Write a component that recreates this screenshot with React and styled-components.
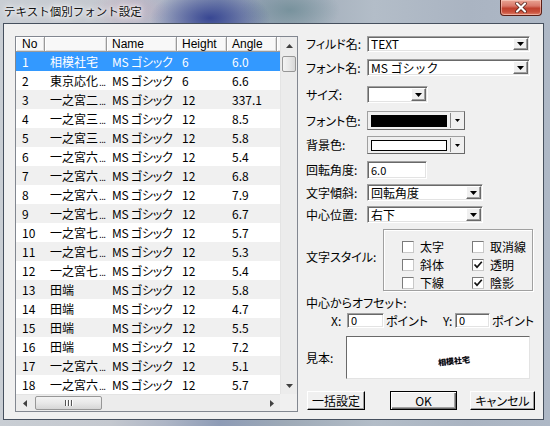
import React from 'react';
import styled, { createGlobalStyle } from 'styled-components';

const Global = createGlobalStyle`
  html, body { margin: 0; padding: 0; }
  body {
    width: 550px; height: 426px; overflow: hidden;
    font-family: "Noto Sans CJK JP", "Noto Sans", sans-serif;
    font-size: 12px; color: #000;
  }
  * { box-sizing: border-box; }
`;

const Win = styled.div`
  width: 550px;
  height: 426px;
  display: flex;
  flex-direction: column;
  padding: 0 6px 6px 3px;
  background:
    radial-gradient(ellipse 60px 30px at 210px 18px, rgba(40,55,140,0.85), rgba(40,55,140,0) 100%),
    radial-gradient(ellipse 50px 25px at 290px 10px, rgba(110,140,150,0.8), rgba(110,140,150,0) 100%),
    radial-gradient(ellipse 40px 20px at 130px 10px, rgba(200,170,190,0.6), rgba(200,170,190,0) 100%),
    linear-gradient(90deg, #c9ced4 0%, #c4c8cf 20%, #aeb6c6 30%, #8e9cb6 40%, #9eaab7 52%, #b3bdc8 68%, #aab4c2 85%, #aeb8c6 100%);
`;

const TitleBar = styled.div`
  height: 23px;
  display: flex;
  align-items: flex-start;
  justify-content: space-between;
  flex: none;
`;

const Title = styled.div`
  padding: 3px 0 0 1px;
  font-size: 11.5px;
  line-height: 16px;
  color: #111;
  text-shadow: 0 0 6px #fff, 0 0 10px #fff, 0 0 3px rgba(255,255,255,0.9);
`;

const CloseBtn = styled.div`
  width: 42px;
  height: 16px;
  margin-right: 2px;
  border: 1px solid #5b1f16;
  border-top: none;
  border-radius: 0 0 4px 4px;
  background: linear-gradient(#e9a493 0%, #d9786a 40%, #c0412e 55%, #c9503c 80%, #e0826c 100%);
  box-shadow: inset 0 0 0 1px rgba(255,220,210,0.5);
  display: flex;
  align-items: center;
  justify-content: center;
`;

const Client = styled.div`
  flex: 1;
  background: #f0f0f0;
  border: 1px solid #46505e;
  display: flex;
  gap: 8px;
  padding: 12px 0 0 11px;
`;

/* ---------- List ---------- */

const ListBox = styled.div`
  width: 283px;
  height: 376px;
  border: 1px solid #828790;
  background: #fff;
  display: grid;
  grid-template-columns: 264px 17px;
  grid-template-rows: 357px 17px;
  flex: none;
`;

const Content = styled.div`
  display: flex;
  flex-direction: column;
  overflow: hidden;
`;

const COLS = '29px 62px 70px 50px 50px 1fr';

const Header = styled.div`
  display: grid;
  grid-template-columns: ${COLS};
  height: 15px;
  flex: none;
`;

const HeadCell = styled.div`
  background: #f8f8f8;
  border-right: 1px solid #9a9a9a;
  border-bottom: 1px solid #9a9a9a;
  box-shadow: inset 1px 1px #fff, inset -1px -1px #dcdcdc;
  padding-left: ${p => p.$pl ?? 5}px;
  font-family: "Liberation Sans", "Noto Sans CJK JP", sans-serif;
  font-size: 12px;
  line-height: 14px;
  white-space: nowrap;
  overflow: hidden;
`;

const Row = styled.div`
  display: grid;
  grid-template-columns: ${COLS};
  height: 19px;
  flex: none;
  background: ${p => (p.$sel ? '#3399ff' : p.$alt ? '#f0f0f0' : '#fff')};
  color: ${p => (p.$sel ? '#fff' : '#000')};
`;

const Cell = styled.div`
  padding-left: ${p => p.$pl ?? 5}px;
  line-height: 19px;
  white-space: nowrap;
  overflow: hidden;
  font-size: 12px;
  font-feature-settings: ${p => (p.$fit ? '"palt"' : 'normal')};
  letter-spacing: ${p => (p.$fit ? '-0.2px' : '0')};
`;

const Dots = styled.span`
  font-family: "Liberation Sans", sans-serif;
  font-size: 10px;
  letter-spacing: -0.6px;
  margin-left: 1px;
`;

const VScroll = styled.div`
  background: #ececec;
  border-left: 1px solid #e4e4e4;
  display: flex;
  flex-direction: column;
`;

const ArrowBox = styled.div`
  width: ${p => p.$w ?? 17}px;
  height: ${p => p.$h ?? 17}px;
  flex: none;
  display: flex;
  align-items: center;
  justify-content: center;
`;

const VTrack = styled.div`
  flex: 1;
  padding: 2px 1px 0 1px;
`;

const VThumb = styled.div`
  height: 16px;
  border: 1px solid #979797;
  border-radius: 2px;
  background: linear-gradient(90deg, #f3f3f3, #e8e8e8 50%, #d8d8d8);
`;

const HScroll = styled.div`
  background: #ececec;
  border-top: 1px solid #e4e4e4;
  display: flex;
  align-items: stretch;
`;

const HTrack = styled.div`
  flex: 1;
  padding: 1px 0 1px 2px;
  display: flex;
`;

const HThumb = styled.div`
  width: 67px;
  border: 1px solid #979797;
  border-radius: 2px;
  background: linear-gradient(#f3f3f3, #e8e8e8 50%, #d6d6d6);
  display: flex;
  align-items: center;
  justify-content: center;
  gap: 2px;
`;

const Grip = styled.span`
  width: 1px;
  height: 6px;
  background: #555;
  box-shadow: 1px 0 #fff;
`;

const Corner = styled.div`
  background: #f0f0f0;
`;

/* ---------- Right panel ---------- */

const Panel = styled.div`
  flex: 1;
  display: flex;
  flex-direction: column;
`;

const FRow = styled.div`
  height: ${p => p.$h}px;
  flex: none;
  display: flex;
  align-items: flex-start;
  padding-left: ${p => p.$pl ?? 0}px;
`;

const Label = styled.div`
  width: ${p => (p.$w ? `${p.$w}px` : 'auto')};
  line-height: ${p => p.$lh ?? 16}px;
  font-size: 12px;
  font-feature-settings: "palt";
  white-space: nowrap;
  flex: none;
`;

const Sunken = styled.div`
  width: ${p => p.$w}px;
  height: ${p => p.$h}px;
  background: #fff;
  border: 1px solid;
  border-color: #a0a0a0 #fff #fff #a0a0a0;
  box-shadow: inset 1px 1px #696969, inset -1px -1px #e3e3e3;
  display: flex;
  align-items: center;
  flex: none;
`;

const FieldText = styled.div`
  flex: 1;
  padding-left: ${p => p.$pl ?? 3}px;
  line-height: ${p => p.$lh}px;
  font-size: ${p => p.$fs ?? 12}px;
  white-space: nowrap;
`;

const DropBtn = styled.div`
  width: 15px;
  align-self: stretch;
  margin: 1px 1px 1px 0;
  background: #f0f0f0;
  border: 1px solid;
  border-color: #fff #696969 #696969 #fff;
  box-shadow: inset -1px -1px #a0a0a0;
  display: flex;
  align-items: center;
  justify-content: center;
`;

const ColorBox = styled.div`
  width: 98px;
  height: ${p => p.$h}px;
  border: 1px solid;
  border-color: #a0a0a0 #696969 #696969 #a0a0a0;
  background: #f0f0f0;
  display: flex;
  padding: 3px 0 2px 3px;
  flex: none;
`;

const Swatch = styled.div`
  flex: 1;
  background: ${p => p.$c};
  border: 1px solid #000;
`;

const ColorArrow = styled.div`
  width: 14px;
  margin: -2px 0 -1px 3px;
  border-left: 1px solid #8a8a8a;
  display: flex;
  align-items: center;
  justify-content: center;
`;

const Group = styled.div`
  width: 150px;
  height: 62px;
  border: 1px solid #a0a0a0;
  box-shadow: inset 1px 1px #fff, 1px 1px #fff;
  display: grid;
  grid-template-columns: 70px 1fr;
  grid-auto-rows: 12px;
  row-gap: 6px;
  padding: 11px 0 0 18px;
  flex: none;
`;

const Check = styled.div`
  display: flex;
  align-items: center;
  gap: 6px;
  height: 12px;
`;

const CheckBox = styled.div`
  width: 12px;
  height: 12px;
  background: #fff;
  border: 1px solid;
  border-color: #7a7a7a #c8c8c8 #c8c8c8 #7a7a7a;
  display: flex;
  align-items: center;
  justify-content: center;
  flex: none;
`;

const CheckText = styled.span`
  line-height: 12px;
  font-size: 12px;
`;

const Unit = styled.div`
  width: ${p => p.$w}px;
  padding-left: 2px;
  line-height: 15px;
  font-size: 12px;
  font-feature-settings: "palt";
  white-space: nowrap;
  flex: none;
`;

const Preview = styled.div`
  width: 184px;
  height: 43px;
  background: #fff;
  border: 1px solid;
  border-color: #696969 #e3e3e3 #e3e3e3 #696969;
  display: flex;
  align-items: center;
  justify-content: center;
  flex: none;
`;

const PreviewText = styled.div`
  font-size: 8px;
  line-height: 8px;
  font-weight: bold;
  transform: translate(16px, 3px) rotate(-6deg);
  text-shadow: -0.5px 0 rgba(0,90,255,0.5), 0.5px 0 rgba(255,150,0,0.5);
`;

const Btn = styled.div`
  width: ${p => p.$w}px;
  height: 19px;
  margin-left: ${p => p.$ml ?? 0}px;
  background: #f0f0f0;
  border: 1px solid;
  border-color: ${p => (p.$def ? '#000' : '#fff #000 #000 #fff')};
  box-shadow: ${p => (p.$def
    ? 'inset 1px 1px #fff, inset -1px -1px #696969, inset -2px -2px #a0a0a0'
    : 'inset -1px -1px #a0a0a0')};
  display: flex;
  align-items: center;
  justify-content: center;
  font-size: 12px;
  font-feature-settings: "palt";
  line-height: 17px;
  flex: none;
`;

/* ---------- icons ---------- */

const TriDown = ({ w = 7, h = 4, c = '#000' }) => (
  <svg width={w} height={h} viewBox={`0 0 ${w} ${h}`}><path d={`M0 0H${w}L${w / 2} ${h}Z`} fill={c} /></svg>
);
const TriUp = ({ w = 7, h = 4, c = '#404040' }) => (
  <svg width={w} height={h} viewBox={`0 0 ${w} ${h}`}><path d={`M0 ${h}H${w}L${w / 2} 0Z`} fill={c} /></svg>
);
const TriLeft = ({ c = '#404040' }) => (
  <svg width="4" height="7" viewBox="0 0 4 7"><path d="M4 0V7L0 3.5Z" fill={c} /></svg>
);
const TriRight = ({ c = '#404040' }) => (
  <svg width="4" height="7" viewBox="0 0 4 7"><path d="M0 0V7L4 3.5Z" fill={c} /></svg>
);
const Tick = () => (
  <svg width="10" height="10" viewBox="0 0 10 10">
    <path d="M1.5 4.5L4 7.2L8.8 1.8" fill="none" stroke="#111" strokeWidth="1.7" />
  </svg>
);
const CloseX = () => (
  <svg width="14" height="11" viewBox="0 0 14 11">
    <path d="M3 1.5L11 9.5M11 1.5L3 9.5" stroke="#4a1a12" strokeWidth="3.6" strokeLinecap="round" />
    <path d="M3 1.5L11 9.5M11 1.5L3 9.5" stroke="#fff" strokeWidth="2.2" strokeLinecap="round" />
  </svg>
);

/* ---------- data ---------- */

const rows = [
  ['1', '相模社宅', false, '6', '6.0'],
  ['2', '東京応化', true, '6', '6.6'],
  ['3', '一之宮二', true, '12', '337.1'],
  ['4', '一之宮三', true, '12', '8.5'],
  ['5', '一之宮三', true, '12', '5.8'],
  ['6', '一之宮六', true, '12', '5.4'],
  ['7', '一之宮六', true, '12', '6.8'],
  ['8', '一之宮六', true, '12', '7.9'],
  ['9', '一之宮七', true, '12', '6.7'],
  ['10', '一之宮七', true, '12', '5.7'],
  ['11', '一之宮七', true, '12', '5.3'],
  ['12', '一之宮七', true, '12', '5.4'],
  ['13', '田端', false, '12', '5.8'],
  ['14', '田端', false, '12', '4.7'],
  ['15', '田端', false, '12', '5.5'],
  ['16', '田端', false, '12', '7.2'],
  ['17', '一之宮六', true, '12', '5.1'],
  ['18', '一之宮六', true, '12', '5.7'],
];

const checks = [
  ['太字', false], ['取消線', false],
  ['斜体', false], ['透明', true],
  ['下線', false], ['陰影', true],
];

const Combo = ({ w, h, text }) => (
  <Sunken $w={w} $h={h}>
    <FieldText $lh={h - 2}>{text}</FieldText>
    <DropBtn><TriDown /></DropBtn>
  </Sunken>
);

export default function App() {
  return (
    <>
      <Global />
      <Win>
        <TitleBar>
          <Title>テキスト個別フォント設定</Title>
          <CloseBtn><CloseX /></CloseBtn>
        </TitleBar>
        <Client>
          <ListBox>
            <Content>
              <Header>
                <HeadCell $pl={6}>No</HeadCell>
                <HeadCell />
                <HeadCell>Name</HeadCell>
                <HeadCell>Height</HeadCell>
                <HeadCell>Angle</HeadCell>
                <HeadCell />
              </Header>
              {rows.map(([no, name, trunc, h, a], i) => (
                <Row key={no} $sel={i === 0} $alt={i % 2 === 0}>
                  <Cell $pl={6}>{no}</Cell>
                  <Cell>{name}{trunc && <Dots>...</Dots>}</Cell>
                  <Cell $fit>MS ゴシック</Cell>
                  <Cell>{h}</Cell>
                  <Cell>{a}</Cell>
                  <Cell />
                </Row>
              ))}
            </Content>
            <VScroll>
              <ArrowBox $w={16}><TriUp /></ArrowBox>
              <VTrack><VThumb /></VTrack>
              <ArrowBox $w={16}><TriDown c="#404040" /></ArrowBox>
            </VScroll>
            <HScroll>
              <ArrowBox $h={16}><TriLeft /></ArrowBox>
              <HTrack>
                <HThumb><Grip /><Grip /><Grip /></HThumb>
              </HTrack>
              <ArrowBox $h={16}><TriRight /></ArrowBox>
            </HScroll>
            <Corner />
          </ListBox>

          <Panel>
            <FRow $h={23}>
              <Label $w={61} $lh={16}>フィルド名:</Label>
              <Combo w={163} h={16} text="TEXT" />
            </FRow>
            <FRow $h={27}>
              <Label $w={61} $lh={17}>フォント名:</Label>
              <Combo w={163} h={17} text="MS ゴシック" />
            </FRow>
            <FRow $h={25}>
              <Label $w={61} $lh={17}>サイズ:</Label>
              <Combo w={61} h={17} text="" />
            </FRow>
            <FRow $h={25}>
              <Label $w={61} $lh={19}>フォント色:</Label>
              <ColorBox $h={19}>
                <Swatch $c="#000" />
                <ColorArrow><TriDown w={5} h={3} /></ColorArrow>
              </ColorBox>
            </FRow>
            <FRow $h={25}>
              <Label $w={61} $lh={18}>背景色:</Label>
              <ColorBox $h={18}>
                <Swatch $c="#fff" />
                <ColorArrow><TriDown w={5} h={3} /></ColorArrow>
              </ColorBox>
            </FRow>
            <FRow $h={23}>
              <Label $w={61} $lh={18}>回転角度:</Label>
              <Sunken $w={60} $h={18}>
                <FieldText $lh={16} $fs={11}>6.0</FieldText>
              </Sunken>
            </FRow>
            <FRow $h={22}>
              <Label $w={61} $lh={17}>文字傾斜:</Label>
              <Combo w={116} h={17} text="回転角度" />
            </FRow>
            <FRow $h={23}>
              <Label $w={61} $lh={17}>中心位置:</Label>
              <Combo w={116} h={17} text="右下" />
            </FRow>
            <FRow $h={62}>
              <Label $w={77} $lh={56}>文字スタイル:</Label>
              <Group>
                {checks.map(([t, on]) => (
                  <Check key={t}>
                    <CheckBox>{on && <Tick />}</CheckBox>
                    <CheckText>{t}</CheckText>
                  </Check>
                ))}
              </Group>
            </FRow>
            <FRow $h={22}>
              <Label $lh={24}>中心からオフセット:</Label>
            </FRow>
            <FRow $h={23} $pl={25}>
              <Label $w={16} $lh={15}>X:</Label>
              <Sunken $w={37} $h={15}>
                <FieldText $lh={13} $fs={11}>0</FieldText>
              </Sunken>
              <Unit $w={59}>ポイント</Unit>
              <Label $w={12} $lh={15}>Y:</Label>
              <Sunken $w={35} $h={15}>
                <FieldText $lh={13} $fs={11}>0</FieldText>
              </Sunken>
              <Unit $w={50}>ポイント</Unit>
            </FRow>
            <FRow $h={55}>
              <Label $w={40} $lh={43}>見本:</Label>
              <Preview>
                <PreviewText>相模社宅</PreviewText>
              </Preview>
            </FRow>
            <FRow $h={19} $pl={1}>
              <Btn $w={58}>一括設定</Btn>
              <Btn $w={67} $ml={25} $def>OK</Btn>
              <Btn $w={65} $ml={13}>キャンセル</Btn>
            </FRow>
          </Panel>
        </Client>
      </Win>
    </>
  );
}
